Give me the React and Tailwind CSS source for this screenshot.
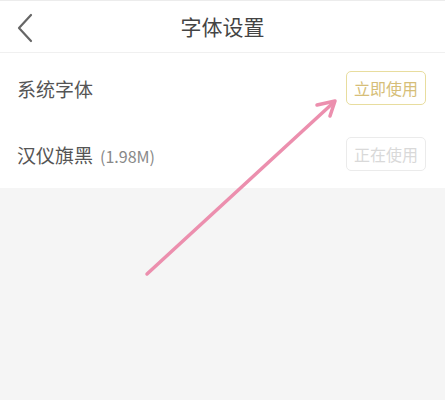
import React from "react";

const FONT = { fontFamily: '"Noto Sans CJK SC", "Noto Sans", sans-serif' };

const fonts = [
  { id: 1, name: "系统字体", size: null, label: "立即使用", active: true },
  { id: 2, name: "汉仪旗黑", size: "(1.98M)", label: "正在使用", active: false },
];

export default function App() {
  return (
    <div className="relative w-[445px] h-[400px] bg-[#f5f5f5] overflow-hidden" style={FONT}>
      {/* header */}
      <div className="relative h-[53px] bg-white border-t border-[#ececec] border-b border-b-[#f0f0f0] flex items-center justify-center">
        <svg className="absolute left-[14px] top-[12px]" width="22" height="30" viewBox="0 0 22 30">
          <path d="M17 2 L5 15 L17 28" fill="none" stroke="#666" strokeWidth="2.2" strokeLinecap="round" strokeLinejoin="round" />
        </svg>
        <span className="text-[21px] text-[#444] leading-none">字体设置</span>
      </div>

      {/* list */}
      <div className="bg-white pt-[2px] pb-[1px]">
        {fonts.map((f) => (
          <div key={f.id} className="h-[66px] flex items-center justify-between pl-[17px] pr-[19px]">
            <div className="flex items-baseline gap-[7px] pt-[3px]">
              <span className="text-[19px] text-[#555]">{f.name}</span>
              {f.size && <span className="text-[16px] text-[#888]">{f.size}</span>}
            </div>
            <button
              className={
                f.active
                  ? "w-[80px] h-[34px] rounded-[5px] border-[1.5px] border-[#e8dd9e] text-[16px] text-[#d6be78] bg-white"
                  : "w-[80px] h-[34px] rounded-[5px] border-[1.5px] border-[#ebebeb] text-[16px] text-[#d9d9d9] bg-white"
              }
            >
              {f.label}
            </button>
          </div>
        ))}
      </div>

      {/* annotation arrow */}
      <svg className="absolute left-0 top-0 pointer-events-none" width="445" height="400" viewBox="0 0 445 400">
        <g stroke="#ec8fae" strokeWidth="3.5" strokeLinecap="round" strokeLinejoin="round" fill="none">
          <path d="M147 274 L333 103" />
          <path d="M317 105 L335 101 L330 116" />
        </g>
      </svg>
    </div>
  );
}
